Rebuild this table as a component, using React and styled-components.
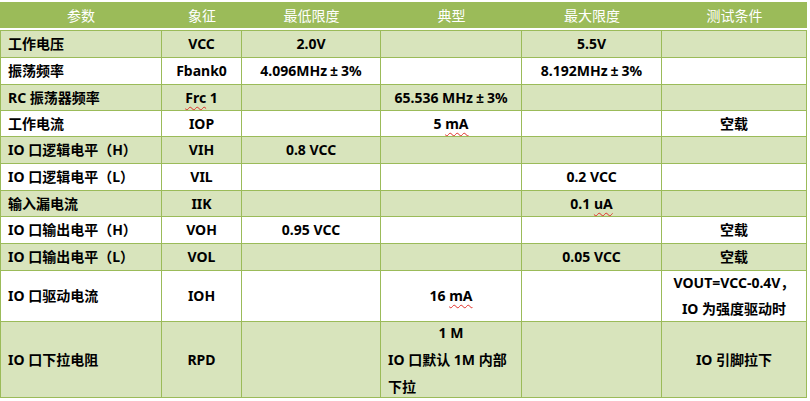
import styled, { createGlobalStyle } from "styled-components";

const GlobalStyle = createGlobalStyle`
  html, body {
    margin: 0;
    padding: 0;
    background: #ffffff;
  }
  body {
    font-family: "Noto Sans", "Noto Sans CJK SC", sans-serif;
  }
`;

const green = "#9bbb59";
const shade = "#d8e4bc";

const Page = styled.div`
  padding-top: 2px;
  width: 810px;
`;

const Table = styled.table`
  border-collapse: separate;
  border-spacing: 0;
  table-layout: fixed;
  width: 807px;
  font-size: 14px;
`;

const HeadCell = styled.th`
  height: 26px;
  background: ${green};
  color: #ffffff;
  font-weight: 400;
  text-align: center;
  vertical-align: middle;
  padding: 0;
  border-bottom: 2px solid #ffffff;
`;

const Cell = styled.td`
  height: ${(p) => p.$h}px;
  padding: 0 7px;
  box-sizing: border-box;
  background: ${(p) => (p.$shaded ? shade : "#ffffff")};
  color: #000000;
  font-weight: 700;
  line-height: 20px;
  text-align: ${(p) => (p.$first ? "left" : "center")};
  vertical-align: middle;
  white-space: nowrap;
  border-right: 1px solid ${green};
  border-bottom: 1px solid ${green};
  border-left: ${(p) => (p.$first ? `1px solid ${green}` : "none")};
  border-top: ${(p) => (p.$top ? `1px solid ${green}` : "none")};
`;

// multi-line cell content, allowed to spill a little like the Word table does
const Lines = styled.div`
  height: ${(p) => p.$h}px;
  line-height: ${(p) => p.$lh}px;
  display: flex;
  flex-direction: column;
  justify-content: center;
`;

const Spell = styled.span`
  text-decoration: underline wavy #e0302a;
  text-decoration-thickness: 1px;
  text-underline-offset: 3px;
`;

const Pm = styled.span`
  margin: 0 3px;
`;

const Centered = styled.div`
  text-align: center;
`;

const LeftText = styled.div`
  text-align: left;
`;

const columns = [162, 80, 139, 141, 140, 145];

const headers = ["参数", "象征", "最低限度", "典型", "最大限度", "测试条件"];

// each row: [name, symbol, min, typ, max, condition], height
const rows = [
  { h: 28, cells: ["工作电压", "VCC", "2.0V", "", "5.5V", ""] },
  {
    h: 27,
    cells: [
      "振荡频率",
      "Fbank0",
      <>4.096MHz<Pm>±</Pm>3%</>,
      "",
      <>8.192MHz<Pm>±</Pm>3%</>,
      "",
    ],
  },
  {
    h: 26,
    cells: [
      "RC 振荡器频率",
      <><Spell>Frc</Spell> 1</>,
      "",
      <>65.536 MHz<Pm>±</Pm>3%</>,
      "",
      "",
    ],
  },
  { h: 26, cells: ["工作电流", "IOP", "", <>5 <Spell>mA</Spell></>, "", "空载"] },
  { h: 27, cells: ["IO 口逻辑电平（H）", "VIH", "0.8 VCC", "", "", ""] },
  { h: 27, cells: ["IO 口逻辑电平（L）", "VIL", "", "", "0.2 VCC", ""] },
  { h: 26, cells: ["输入漏电流", "IIK", "", "", <>0.1 <Spell>uA</Spell></>, ""] },
  { h: 27, cells: ["IO 口输出电平（H）", "VOH", "0.95 VCC", "", "", "空载"] },
  { h: 27, cells: ["IO 口输出电平（L）", "VOL", "", "", "0.05 VCC", "空载"] },
  {
    h: 51,
    cells: [
      "IO 口驱动电流",
      "IOH",
      "",
      <>16 <Spell>mA</Spell></>,
      "",
      <Lines $h={44} $lh={26}>
        <div>VOUT=VCC-0.4V，</div>
        <div>IO 为强度驱动时</div>
      </Lines>,
    ],
  },
  {
    h: 76,
    cells: [
      "IO 口下拉电阻",
      "RPD",
      "",
      <Lines $h={68} $lh={27}>
        <Centered>1 M</Centered>
        <LeftText>IO 口默认 1M 内部</LeftText>
        <LeftText>下拉</LeftText>
      </Lines>,
      "",
      "IO 引脚拉下",
    ],
  },
];

export default function App() {
  return (
    <Page>
      <GlobalStyle />
      <Table>
        <colgroup>
          {columns.map((w, i) => (
            <col key={i} style={{ width: w }} />
          ))}
        </colgroup>
        <thead>
          <tr>
            {headers.map((h) => (
              <HeadCell key={h}>{h}</HeadCell>
            ))}
          </tr>
        </thead>
        <tbody>
          {rows.map((row, r) => (
            <tr key={r}>
              {row.cells.map((c, i) => (
                <Cell
                  key={i}
                  $shaded={r % 2 === 0}
                  $first={i === 0}
                  $top={r === 0}
                  $h={row.h}
                >
                  {c}
                </Cell>
              ))}
            </tr>
          ))}
        </tbody>
      </Table>
    </Page>
  );
}
